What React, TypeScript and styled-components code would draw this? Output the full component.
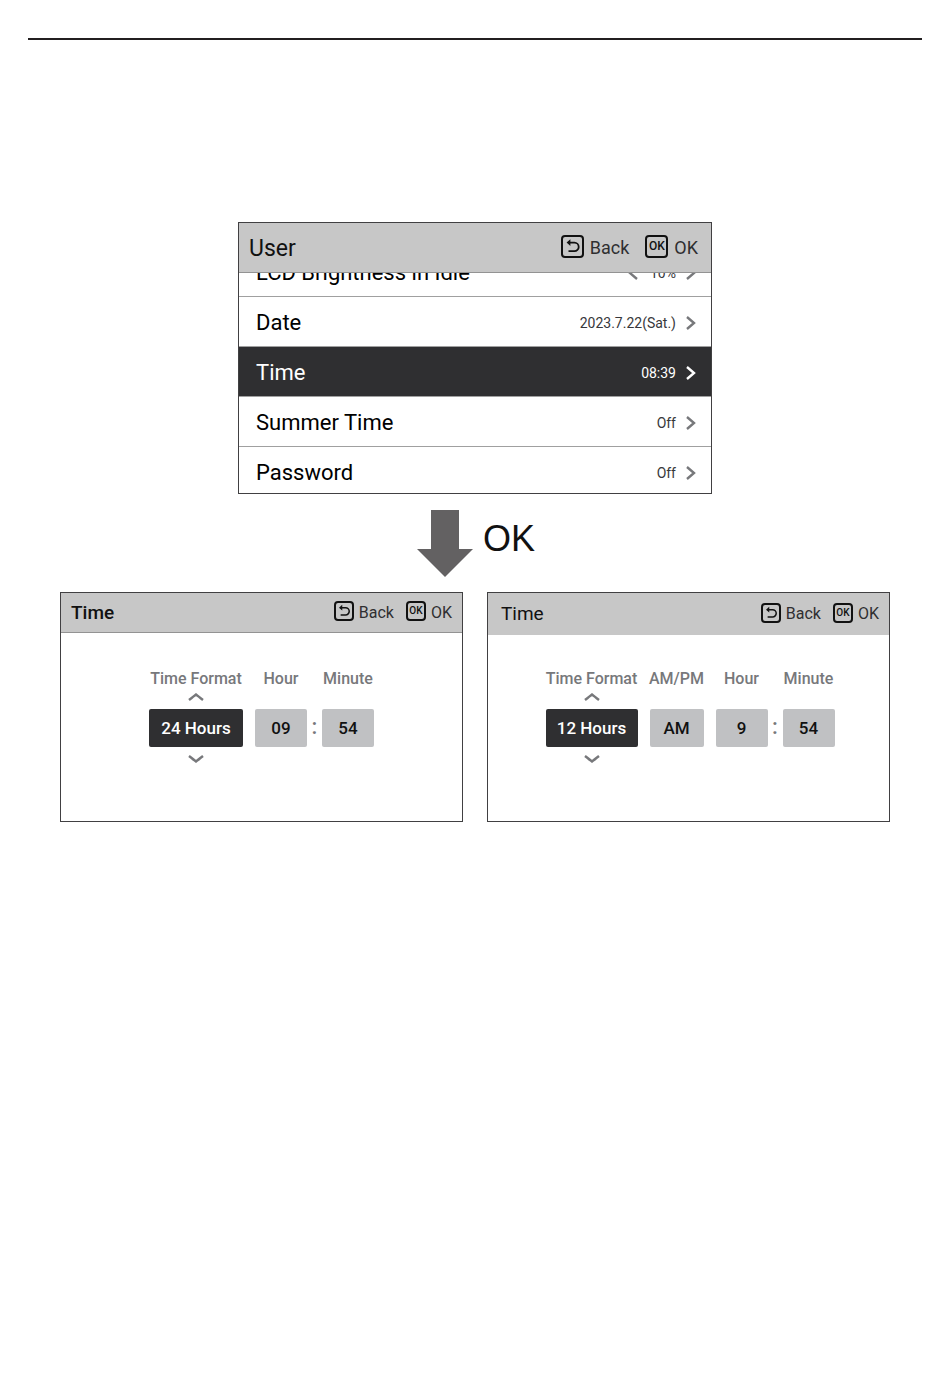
import React, { useId } from "react";
import styled, { createGlobalStyle } from "styled-components";

const GlobalStyle = createGlobalStyle`
  *, *::before, *::after { box-sizing: border-box; }
  body {
    margin: 0;
    background: #fff;
    color: #111;
    font-family: Roboto, "Liberation Sans", sans-serif;
  }
  button, input { font: inherit; color: inherit; }
`;

const Page = styled.main`
  display: flex;
  flex-direction: column;
  align-items: center;
  padding: 38px 28px 48px;
`;

const TopRule = styled.hr`
  width: 100%;
  height: 2px;
  margin: 0 0 182px;
  border: 0;
  background: #231f20;
`;

const Screen = styled.section`
  display: flex;
  flex-direction: column;
  min-width: 0;
  border: 1px solid #414042;
  background: #fff;
  overflow: hidden;
`;

const MenuScreen = styled(Screen)`
  width: 100%;
  max-width: 474px;
`;

const Header = styled.header<{ $large?: boolean; $lined?: boolean; $inset?: number }>`
  display: flex;
  align-items: center;
  justify-content: space-between;
  flex: none;
  height: ${(p) => (p.$large ? 50 : p.$lined ? 40 : 42)}px;
  padding: 0 ${(p) => (p.$large ? 13 : 10)}px 0 ${(p) => p.$inset ?? 10}px;
  background: #c7c7c7;
  border-bottom: ${(p) => (p.$lined ? "1px solid #939393" : "0")};
`;

const Title = styled.h2<{ $large?: boolean; $medium?: boolean }>`
  margin: 0;
  padding-top: ${(p) => (p.$large ? 2 : 0)}px;
  font-size: ${(p) => (p.$large ? 23 : 19)}px;
  font-weight: ${(p) => (p.$medium ? 500 : 400)};
  line-height: 24px;
`;

const Actions = styled.div<{ $large?: boolean }>`
  display: flex;
  gap: ${(p) => (p.$large ? 16 : 12)}px;
`;

const Action = styled.button<{ $large?: boolean }>`
  display: flex;
  align-items: center;
  gap: ${(p) => (p.$large ? 6 : 5)}px;
  padding: 0;
  border: 0;
  background: none;
  color: #2f2f31;
  font-size: ${(p) => (p.$large ? 18 : 16)}px;
  line-height: 24px;
`;

const KeyCap = styled.span<{ $large?: boolean }>`
  display: flex;
  align-items: center;
  justify-content: center;
  width: ${(p) => (p.$large ? 23 : 20)}px;
  height: ${(p) => (p.$large ? 23 : 20)}px;
  margin-bottom: 3px;
  border: 2px solid #111;
  border-radius: 4px;
  color: #111;
  font-size: ${(p) => (p.$large ? 12 : 10)}px;
  font-weight: 500;
  line-height: 12px;
`;

const List = styled.div`
  display: flex;
  flex-direction: column;
  height: 220px;
  overflow: hidden;
`;

const Row = styled.button<{ $selected?: boolean; $scrolled?: boolean }>`
  display: flex;
  align-items: center;
  flex: none;
  width: 100%;
  height: 50px;
  margin: ${(p) => (p.$scrolled ? -26 : 0)}px 0 0;
  padding: 2px 15px 0 17px;
  border: 0;
  border-bottom: 1px solid #a0a0a0;
  background: ${(p) => (p.$selected ? "#2f2f31" : "#fff")};
  color: ${(p) => (p.$selected ? "#fff" : "#000")};
  text-align: left;
`;

const RowLabel = styled.span`
  flex: 1;
  font-size: 22px;
  line-height: 28px;
  white-space: nowrap;
`;

const RowValue = styled.span<{ $selected?: boolean }>`
  margin: 0 10px 0 12px;
  color: ${(p) => (p.$selected ? "#fff" : "#37373b")};
  font-size: 14px;
  line-height: 20px;
  white-space: nowrap;
`;

const Step = styled.div`
  display: flex;
  align-items: flex-start;
  gap: 10px;
  margin: 16px 0 15px;
  padding-left: 2px;
`;

const StepText = styled.p`
  margin: 8px 0 0;
  font-family: "Liberation Sans", Arial, sans-serif;
  font-size: 36px;
  line-height: 42px;
`;

const Screens = styled.div`
  display: grid;
  grid-template-columns: repeat(auto-fit, minmax(320px, 1fr));
  gap: 24px;
  width: 100%;
  max-width: 830px;
`;

const TimeScreen = styled(Screen)`
  min-height: 230px;
`;

const Fields = styled.div<{ $top: number; $inset?: number }>`
  display: flex;
  justify-content: center;
  padding: ${(p) => p.$top}px 0 40px ${(p) => p.$inset ?? 0}px;
`;

const Field = styled.div<{ $width: number }>`
  display: flex;
  flex-direction: column;
  align-items: center;
  width: ${(p) => p.$width}px;
  & + & { margin-left: 12px; }
`;

const FieldLabel = styled.label`
  color: #77787b;
  font-size: 16px;
  font-weight: 500;
  line-height: 20px;
  white-space: nowrap;
`;

const Stepper = styled.button<{ $below?: boolean }>`
  display: flex;
  align-items: center;
  justify-content: center;
  width: 24px;
  height: 20px;
  padding: ${(p) => (p.$below ? "4px 0 0" : "0 0 4px")};
  border: 0;
  background: none;
`;

const StepperSpace = styled.span`
  height: 20px;
`;

const FieldInput = styled.input<{ $active?: boolean }>`
  width: 100%;
  height: 38px;
  padding: 0;
  border: 0;
  border-radius: 2px;
  background: ${(p) => (p.$active ? "#2f2f31" : "#c0c1c3")};
  color: ${(p) => (p.$active ? "#fff" : "#111")};
  font-size: 17px;
  font-weight: 500;
  text-align: center;
`;

const Colon = styled.span`
  width: 15px;
  padding-top: 46px;
  color: #77787b;
  font-size: 22px;
  font-weight: 500;
  line-height: 24px;
  text-align: center;
`;

type Dir = "left" | "right" | "up" | "down";
const chevrons: Record<Dir, { w: number; h: number; d: string }> = {
  left: { w: 10, h: 16, d: "M9 2 L2 8 L9 14" },
  right: { w: 10, h: 16, d: "M1 2 L8 8 L1 14" },
  up: { w: 16, h: 8, d: "M1 7 Q6 3 8 1.5 Q10 3 15 7" },
  down: { w: 16, h: 8, d: "M1 1 Q6 5 8 6.5 Q10 5 15 1" },
};

function Chevron({ dir, color = "#77787b" }: { dir: Dir; color?: string }) {
  const { w, h, d } = chevrons[dir];
  return (
    <svg width={w} height={h} viewBox={`0 0 ${w} ${h}`} aria-hidden="true">
      <path d={d} fill="none" stroke={color} strokeWidth="2.4" />
    </svg>
  );
}

function ReturnIcon({ large }: { large?: boolean }) {
  const size = large ? 19 : 16;
  return (
    <svg width={size} height={size} viewBox="0 0 19 19" aria-hidden="true">
      <path d="M5 5.6H11.4a4.3 4.3 0 0 1 0 8.6H5.5" fill="none" stroke="#111" strokeWidth="1.8" />
      <path d="M3.6 5.6L7.4 2.2V9Z" fill="#111" />
    </svg>
  );
}

function HeaderActions({ large }: { large?: boolean }) {
  return (
    <Actions $large={large}>
      <Action type="button" $large={large}>
        <KeyCap $large={large}><ReturnIcon large={large} /></KeyCap>
        Back
      </Action>
      <Action type="button" $large={large}>
        <KeyCap $large={large}>OK</KeyCap>
        OK
      </Action>
    </Actions>
  );
}

interface MenuItem {
  label: string;
  value: string;
  selected?: boolean;
  scrolled?: boolean;
}

const menu: MenuItem[] = [
  { label: "LCD Brightness in Idle", value: "10%", scrolled: true },
  { label: "Date", value: "2023.7.22(Sat.)" },
  { label: "Time", value: "08:39", selected: true },
  { label: "Summer Time", value: "Off" },
  { label: "Password", value: "Off" },
];

function TimeField({ label, value, width, active }: {
  label: string; value: string; width: number; active?: boolean;
}) {
  const id = useId();
  return (
    <Field $width={width}>
      <FieldLabel htmlFor={id}>{label}</FieldLabel>
      {active ? (
        <Stepper type="button" aria-label="Previous format"><Chevron dir="up" /></Stepper>
      ) : (
        <StepperSpace />
      )}
      <FieldInput id={id} defaultValue={value} $active={active} />
      {active && (
        <Stepper type="button" $below aria-label="Next format"><Chevron dir="down" /></Stepper>
      )}
    </Field>
  );
}

export default function App() {
  return (
    <>
      <GlobalStyle />
      <Page>
        <TopRule />
        <MenuScreen>
          <Header $large $lined>
            <Title $large>User</Title>
            <HeaderActions large />
          </Header>
          <List>
            {menu.map((item) => (
              <Row key={item.label} type="button" $selected={item.selected} $scrolled={item.scrolled}>
                <RowLabel>{item.label}</RowLabel>
                {item.scrolled && <Chevron dir="left" />}
                <RowValue $selected={item.selected}>{item.value}</RowValue>
                <Chevron dir="right" color={item.selected ? "#fff" : undefined} />
              </Row>
            ))}
          </List>
        </MenuScreen>
        <Step>
          <svg width="56" height="67" viewBox="0 0 56 67" aria-hidden="true">
            <path d="M14 0H42V39H56L28 67L0 39H14Z" fill="#636162" />
          </svg>
          <StepText>OK</StepText>
        </Step>
        <Screens>
          <TimeScreen>
            <Header $lined>
              <Title $medium>Time</Title>
              <HeaderActions />
            </Header>
            <Fields $top={36}>
              <TimeField label="Time Format" value="24 Hours" width={94} active />
              <TimeField label="Hour" value="09" width={52} />
              <Colon>:</Colon>
              <TimeField label="Minute" value="54" width={52} />
            </Fields>
          </TimeScreen>
          <TimeScreen>
            <Header $inset={13}>
              <Title>Time</Title>
              <HeaderActions />
            </Header>
            <Fields $top={34} $inset={3}>
              <TimeField label="Time Format" value="12 Hours" width={92} active />
              <TimeField label="AM/PM" value="AM" width={54} />
              <TimeField label="Hour" value="9" width={52} />
              <Colon>:</Colon>
              <TimeField label="Minute" value="54" width={52} />
            </Fields>
          </TimeScreen>
        </Screens>
      </Page>
    </>
  );
}
